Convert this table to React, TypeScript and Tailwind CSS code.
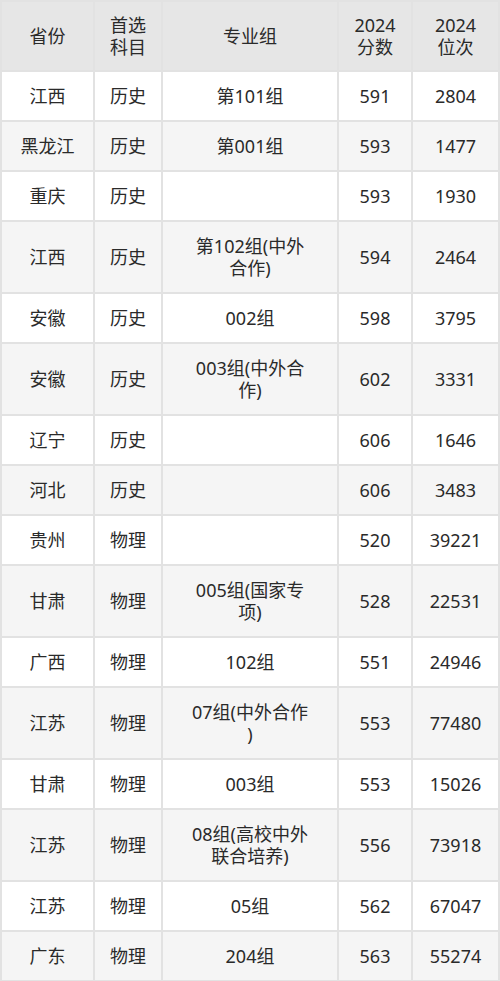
import React from 'react';

type Row = {
  province: string;
  subject: string;
  group: string[];
  score: string;
  rank: string;
};

const rows: Row[] = [
  { province: '江西', subject: '历史', group: ['第101组'], score: '591', rank: '2804' },
  { province: '黑龙江', subject: '历史', group: ['第001组'], score: '593', rank: '1477' },
  { province: '重庆', subject: '历史', group: [], score: '593', rank: '1930' },
  { province: '江西', subject: '历史', group: ['第102组(中外', '合作)'], score: '594', rank: '2464' },
  { province: '安徽', subject: '历史', group: ['002组'], score: '598', rank: '3795' },
  { province: '安徽', subject: '历史', group: ['003组(中外合', '作)'], score: '602', rank: '3331' },
  { province: '辽宁', subject: '历史', group: [], score: '606', rank: '1646' },
  { province: '河北', subject: '历史', group: [], score: '606', rank: '3483' },
  { province: '贵州', subject: '物理', group: [], score: '520', rank: '39221' },
  { province: '甘肃', subject: '物理', group: ['005组(国家专', '项)'], score: '528', rank: '22531' },
  { province: '广西', subject: '物理', group: ['102组'], score: '551', rank: '24946' },
  { province: '江苏', subject: '物理', group: ['07组(中外合作', ')'], score: '553', rank: '77480' },
  { province: '甘肃', subject: '物理', group: ['003组'], score: '553', rank: '15026' },
  { province: '江苏', subject: '物理', group: ['08组(高校中外', '联合培养)'], score: '556', rank: '73918' },
  { province: '江苏', subject: '物理', group: ['05组'], score: '562', rank: '67047' },
  { province: '广东', subject: '物理', group: ['204组'], score: '563', rank: '55274' },
];

const cols = 'grid grid-cols-[93px_68px_176px_74px_87px]';
const cell = 'flex flex-col items-center justify-center text-center border-r-2 border-b-2 border-[#e2e2e2] leading-[22px]';

function Lines({ lines }: { lines: string[] }) {
  return (
    <>
      {lines.map((l, i) => (
        <span key={i} className="block whitespace-nowrap">{l}</span>
      ))}
    </>
  );
}

export default function App() {
  return (
    <div
      className="w-[500px] h-[981px] overflow-hidden bg-white text-[18px] text-[#2a2a2a]"
      style={{ fontFamily: '"Noto Sans", "Noto Sans CJK SC", sans-serif' }}
    >
      <div className="border-l-2 border-t-2 border-[#e2e2e2]">
        <div className={`${cols} h-[70px] bg-[#e6e6e6]`}>
          <div className={cell}>省份</div>
          <div className={cell}><Lines lines={['首选', '科目']} /></div>
          <div className={cell}>专业组</div>
          <div className={cell}><Lines lines={['2024', '分数']} /></div>
          <div className={cell}><Lines lines={['2024', '位次']} /></div>
        </div>
        {rows.map((r, i) => {
          const tall = r.group.length > 1;
          return (
            <div
              key={i}
              className={`${cols} ${tall ? 'h-[72px]' : 'h-[50px]'} ${i % 2 === 1 ? 'bg-[#f5f5f5]' : 'bg-white'}`}
            >
              <div className={cell}>{r.province}</div>
              <div className={cell}>{r.subject}</div>
              <div className={cell}><Lines lines={r.group} /></div>
              <div className={cell}>{r.score}</div>
              <div className={cell}>{r.rank}</div>
            </div>
          );
        })}
      </div>
    </div>
  );
}
